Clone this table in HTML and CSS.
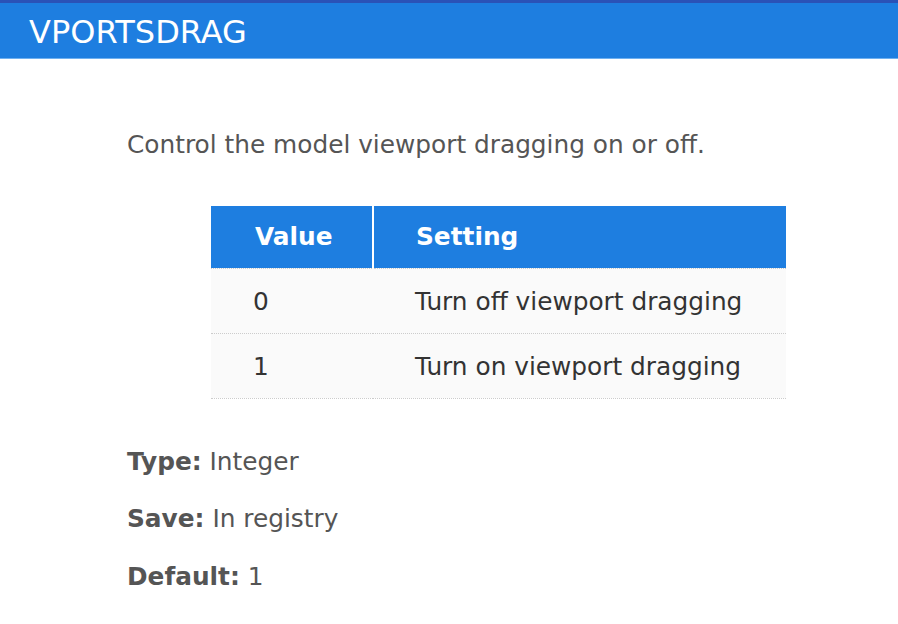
FILE: index.html
```html
<!DOCTYPE html>
<html>
<head>
<meta charset="utf-8">
<link rel="stylesheet" href="styles.css">
</head>
<body>
<header class="topbar"><h1 class="title">VPORTSDRAG</h1></header>
<main class="content">
  <p class="desc">Control the model viewport dragging on or off.</p>
  <table class="values">
    <thead>
      <tr><th class="col-value">Value</th><th class="col-setting">Setting</th></tr>
    </thead>
    <tbody>
      <tr><td>0</td><td>Turn off viewport dragging</td></tr>
      <tr><td>1</td><td>Turn on viewport dragging</td></tr>
    </tbody>
  </table>
  <p class="prop"><b>Type:</b> Integer</p>
  <p class="prop"><b>Save:</b> In registry</p>
  <p class="prop"><b>Default:</b> 1</p>
</main>
</body>
</html>
```
FILE: styles.css
```css
html, body { margin: 0; padding: 0; background: #fff; }
body { font-family: "DejaVu Sans", Verdana, sans-serif; color: #555; }
.topbar {
  height: 55px;
  border-top: 3px solid #2a52b7;
  border-bottom: 1px solid #6fb0f0;
  background: #1e7ee0;
  box-sizing: content-box;
}
.title {
  margin: 0;
  padding: 11px 0 0 29px;
  font-weight: normal;
  font-size: 32px;
  line-height: 36px;
  color: #fff;
}
.content { padding: 71px 0 0 127px; }
.desc { margin: 0; font-size: 24.8px; line-height: 30px; }
.values {
  margin: 46px 0 0 84px;
  width: 575px;
  border-collapse: collapse;
  table-layout: fixed;
}
.values th {
  background: #1e7ee0;
  color: #fff;
  font-size: 24.8px;
  font-weight: bold;
  text-align: left;
  height: 62px;
  padding: 0 0 0 43px;
  box-sizing: border-box;
  white-space: nowrap;
}
.values th.col-value { width: 162px; padding-left: 44px; border-right: 2px solid #fff; }
.values th.col-setting { padding-left: 42px; }
.values td {
  background: #fafafa;
  color: #333;
  font-size: 24.8px;
  height: 65px;
  padding: 2px 0 0 42px;
  border-bottom: 1px dotted #ccc;
  box-sizing: border-box;
  white-space: nowrap;
}
.values tbody tr:first-child td { border-top: 1px dotted #ccc; }
.prop { margin: 0; font-size: 24.8px; line-height: 30px; height: 57.5px; }
.values + .prop { margin-top: 48px; }
.prop b { color: #555; }
```
